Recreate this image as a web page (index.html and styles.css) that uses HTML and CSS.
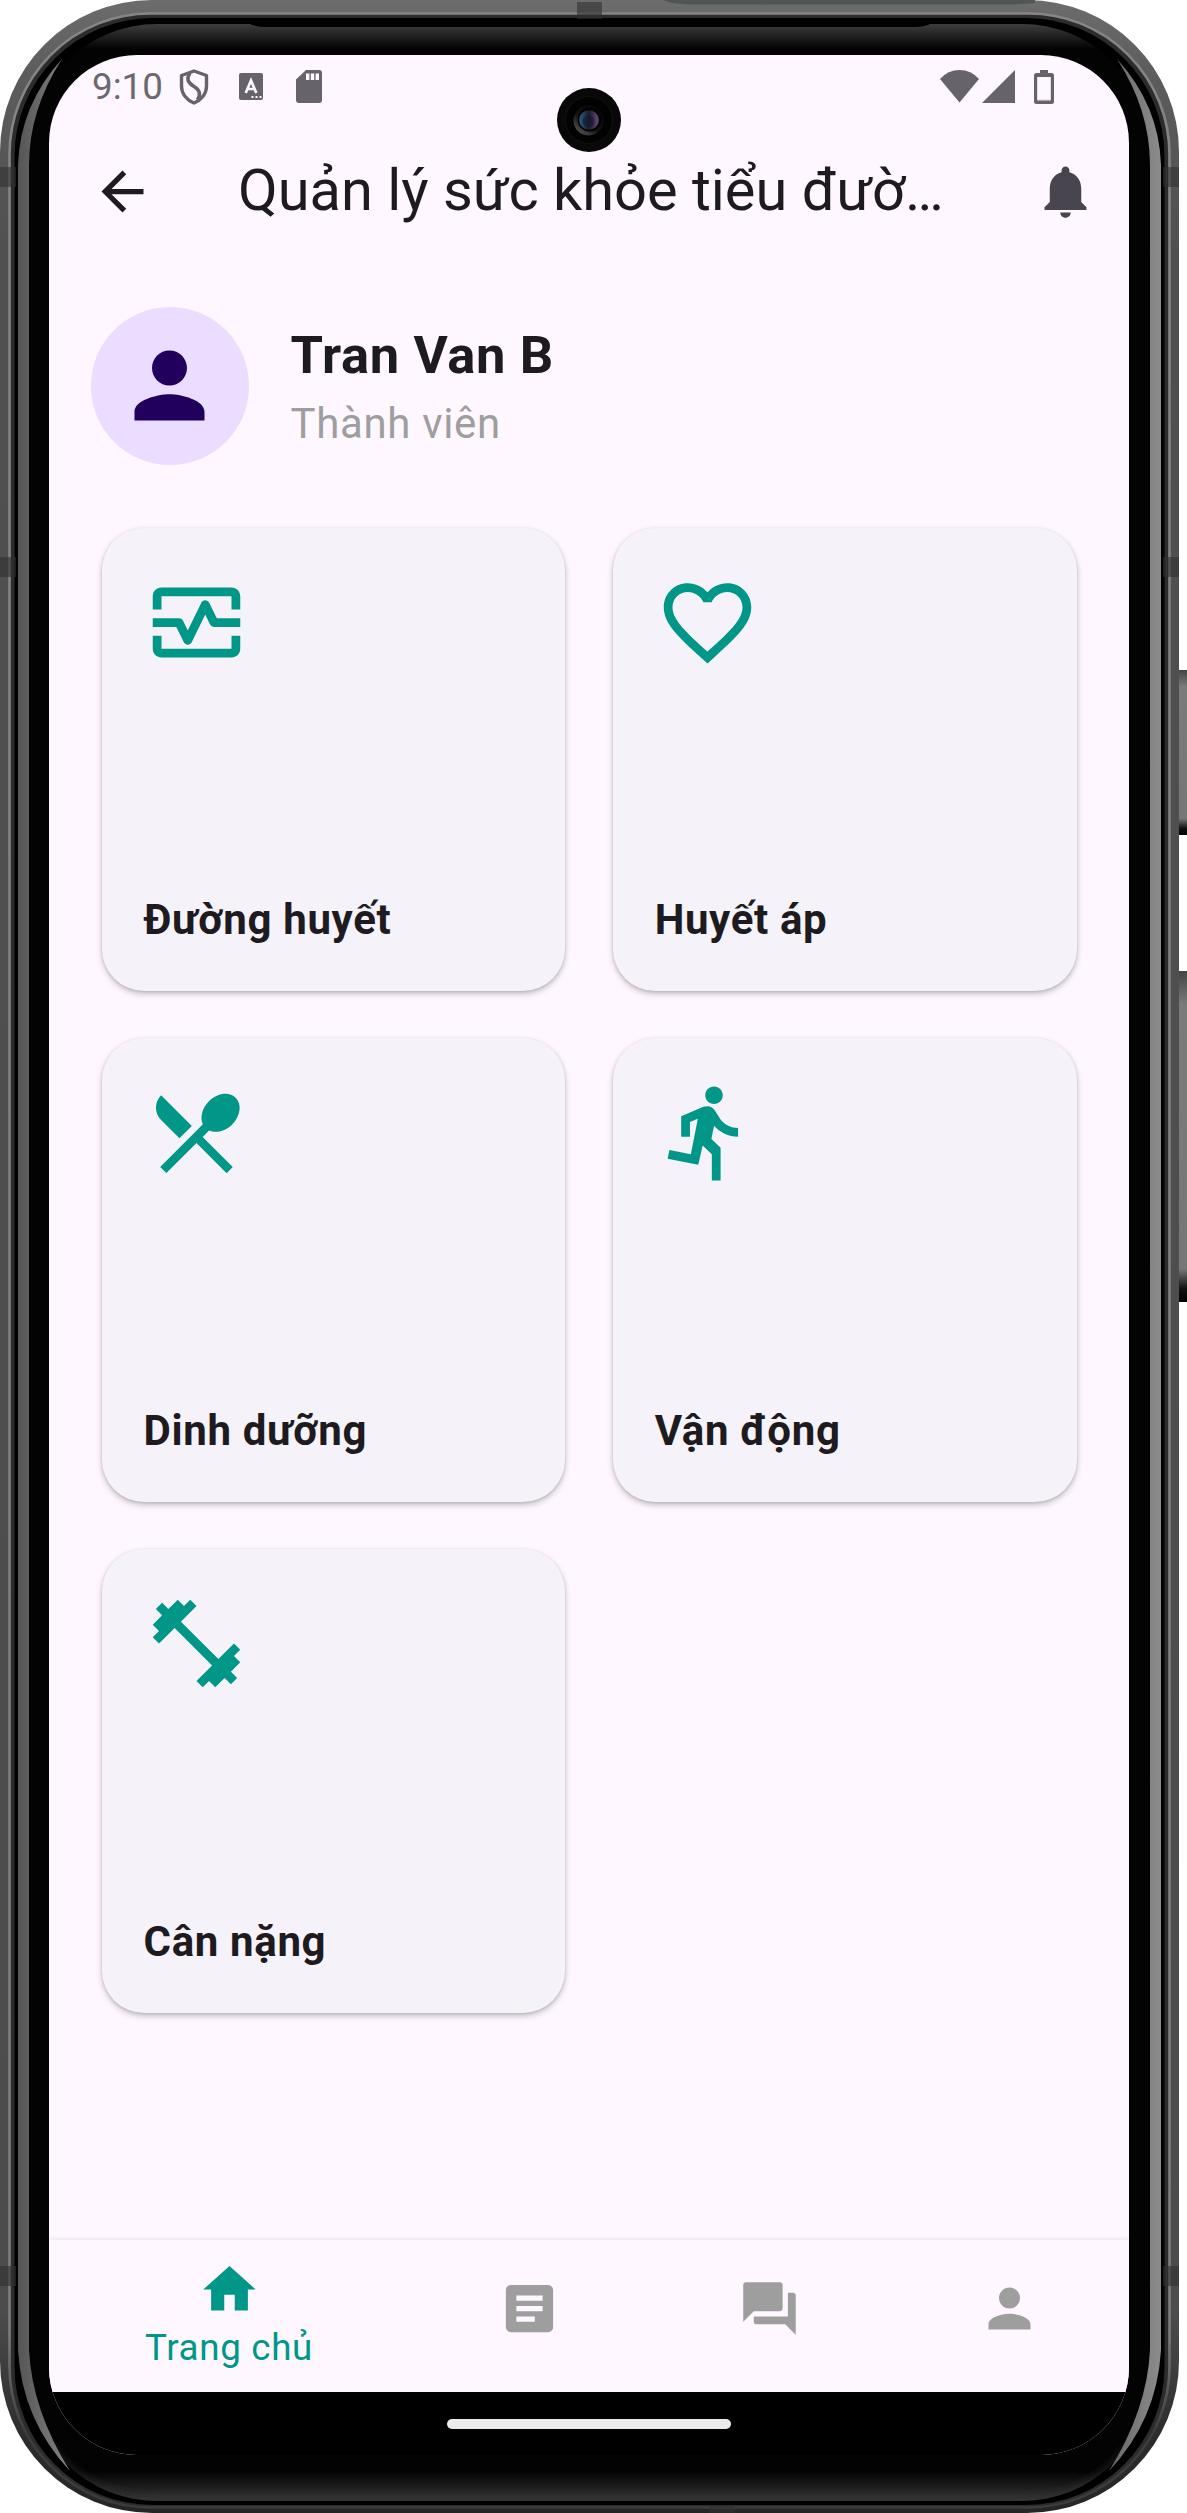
FILE: index.html
```html
<!DOCTYPE html>
<html lang="vi">
<head>
<meta charset="utf-8">
<title>Quản lý sức khỏe tiểu đường</title>
<link rel="stylesheet" href="styles.css">
</head>
<body>
<div class="device">
  <svg class="frame" viewBox="0 0 1187 2513" aria-hidden="true">
    <defs>
      <linearGradient id="shell" x1="0" y1="0" x2="0" y2="1">
        <stop offset="0" stop-color="#6c6c6c"/><stop offset=".03" stop-color="#5c5c5c"/>
        <stop offset=".1" stop-color="#505050"/><stop offset=".92" stop-color="#4c4c4c"/><stop offset=".97" stop-color="#2c2c2c"/><stop offset="1" stop-color="#262626"/>
      </linearGradient>
      <linearGradient id="ring" x1="0" y1="0" x2="0" y2="1">
        <stop offset="0" stop-color="#858585"/><stop offset=".93" stop-color="#7c7c7c"/><stop offset=".97" stop-color="#3c3c3c"/>
      </linearGradient>
      <linearGradient id="glass" gradientUnits="userSpaceOnUse" x1="0" y1="24" x2="0" y2="2501">
        <stop offset="0" stop-color="#3d3d3d"/><stop offset=".004" stop-color="#262626"/><stop offset=".010" stop-color="#030303"/>
        <stop offset=".988" stop-color="#030303"/><stop offset="1" stop-color="#343434"/>
      </linearGradient>
      <linearGradient id="bandL"><stop offset="0" stop-color="#555"/><stop offset="1" stop-color="#858585"/></linearGradient>
      <linearGradient id="bandR"><stop offset="0" stop-color="#666"/><stop offset="1" stop-color="#8c8c8c"/></linearGradient>
      <linearGradient id="key" x1="0" y1="0" x2="0" y2="1">
        <stop offset="0" stop-color="#444"/><stop offset=".1" stop-color="#7a7a7a"/><stop offset=".9" stop-color="#777"/><stop offset=".96" stop-color="#111"/><stop offset="1" stop-color="#000"/>
      </linearGradient>
      <clipPath id="glassClip"><rect x="29" y="24" width="1121" height="2477" rx="128"/></clipPath>
      <filter id="soft" x="-10%" y="-50%" width="120%" height="200%"><feGaussianBlur stdDeviation="6"/></filter>
    </defs>
    <rect x="1174" y="670" width="18" height="165" rx="4" fill="url(#key)"/>
    <rect x="1174" y="971" width="18" height="331" rx="4" fill="url(#key)"/>
    <rect x="0" y="0" width="1179" height="2513" rx="152" fill="url(#shell)"/>
    <path d="M663 0H1035V3Q1020 4.500 1000 4.500H690Q672 4 663 0Z" fill="#505652"/>
    <rect x="9.500" y="13.500" width="1160" height="2494" rx="141" fill="#2c2c2c" stroke="url(#ring)" stroke-width="2.600"/>
    <rect x="14.500" y="18" width="1150" height="2487" rx="138" fill="#000"/>
    <path d="M0 167H16V187H0ZM0 557H16V577H0ZM0 2266H16V2286H0ZM1163 167H1179V187H1163ZM1163 557H1179V577H1163ZM1163 2266H1179V2286H1163ZM577 2H602V19H577ZM709 2505H735V2513H709Z" fill="#303030" fill-opacity=".6"/>
    <rect x="29" y="24" width="1121" height="2477" rx="128" fill="url(#glass)"/>
    <path clip-path="url(#glassClip)" d="M29 2420A128 128 0 0 0 157 2504H1022A128 128 0 0 0 1150 2420" fill="none" stroke="#333" stroke-width="12" filter="url(#soft)"/>
    <path d="M248 23Q254 27 266 27H914Q926 27 932 23Z" fill="#000"/>
    <path d="M18 165Q20 105 62 59Q29 110 29 165V2350Q32 2410 70 2471Q22 2420 18 2350Z" fill="url(#bandL)"/>
    <path d="M1161 165Q1159 105 1117 59Q1150 110 1150 165V2350Q1147 2410 1109 2471Q1157 2420 1161 2350Z" fill="url(#bandR)"/>
  </svg>

  <main class="screen">
    <header class="status">
      <span class="clock">9:10</span>
      <svg class="st-shield" viewBox="0 0 30 36"><path d="M15 2L27.500 6.500V17C27.500 25 22 31 15 34C8 31 2.500 25 2.500 17V6.500Z" fill="none" stroke="#66646a" stroke-width="3.400" stroke-linejoin="round"/><path d="M11 4C7 10 9 14 15 17.500C21 21 22 25 18.500 31" fill="none" stroke="#66646a" stroke-width="3.600"/></svg>
      <svg class="st-key" viewBox="0 0 24 27"><rect width="24" height="27" rx="2" fill="#66646a"/><path d="M6.700 20L12 7.500L17.300 20M8.500 16H15.500" fill="none" stroke="#fef7ff" stroke-width="2.700"/><path d="M12.500 23h2v2h-2zM16.500 23h2v2h-2zM20.500 23h2v2h-2z" fill="#fef7ff"/></svg>
      <svg class="st-sd" viewBox="0 0 26 33"><path d="M10 0H23Q26 0 26 3V30Q26 33 23 33H3Q0 33 0 30V9.500Z" fill="#66646a"/><path d="M10 3.500h3.400v6.500H10zM14.800 3.500h3.400v6.500h-3.400zM19.600 3.500H23v6.500h-3.400z" fill="#fef7ff"/></svg>
      <span class="spacer"></span>
      <svg class="st-wifi" viewBox="0 0 39 33"><path d="M0 9Q8 0 19.500 0T39 9L19.500 32.500Z" fill="#66646a"/></svg>
      <svg class="st-cell" viewBox="0 0 33 33"><path d="M0 33L33 0V33Z" fill="#66646a"/></svg>
      <svg class="st-batt" viewBox="0 0 20 34"><path d="M6 0H14V3H17.500Q20 3 20 5.500V31.500Q20 34 17.500 34H2.500Q0 34 0 31.500V5.500Q0 3 2.500 3H6ZM3.200 7V30.500H16.800V7Z" fill="#66646a" fill-rule="evenodd"/><path d="M3.200 30.200h13.600" stroke="#b79a96" stroke-width=".7"/></svg>
    </header>

    <header class="appbar">
      <svg class="icon" viewBox="0 0 24 24"><path fill="#1d1b20" d="M20 11H7.830l5.590-5.590L12 4l-8 8 8 8 1.410-1.410L7.830 13H20v-2z"/></svg>
      <h1 class="title">Quản lý sức khỏe tiểu đườ…</h1>
      <svg class="icon" viewBox="0 0 24 24"><path fill="#49454f" d="M12 22c1.100 0 2-.9 2-2h-4c0 1.100.89 2 2 2zm6-6v-5c0-3.070-1.640-5.640-4.500-6.320V4c0-.83-.67-1.500-1.500-1.500s-1.500.67-1.500 1.500v.68C7.630 5.360 6 7.920 6 11v5l-2 2v1h16v-1l-2-2z"/></svg>
    </header>

    <section class="profile">
      <div class="avatar"><svg class="icon-lg" viewBox="0 0 24 24"><path fill="#21005d" d="M12 12c2.210 0 4-1.790 4-4s-1.790-4-4-4-4 1.790-4 4 1.790 4 4 4zm0 2c-2.670 0-8 1.340-8 4v2h16v-2c0-2.660-5.330-4-8-4z"/></svg></div>
      <div class="who">
        <div class="name">Tran Van B</div>
        <div class="role">Thành viên</div>
      </div>
    </section>

    <section class="grid">
      <article class="card">
        <svg class="icon-lg" viewBox="0 0 24 24" fill="#009688"><path d="M2 9V6c0-1.100.9-2 2-2h16c1.100 0 2 .9 2 2v3h-2V6H4v3ZM2 15v3c0 1.100.9 2 2 2h16c1.100 0 2-.9 2-2v-3h-2v3H4v-3Z"/><path d="M2 12H8L10 16.100L14 7.900L16 12H22" fill="none" stroke="#009688" stroke-width="2" stroke-linejoin="round"/></svg>
        <div class="label">Đường huyết</div>
      </article>
      <article class="card">
        <svg class="icon-lg" viewBox="0 0 24 24" fill="#009688"><path d="M16.500 3c-1.740 0-3.410.81-4.500 2.090C10.910 3.810 9.240 3 7.500 3 4.420 3 2 5.420 2 8.500c0 3.780 3.400 6.860 8.550 11.540L12 21.350l1.450-1.320C18.600 15.360 22 12.280 22 8.500 22 5.420 19.580 3 16.500 3zm-4.400 15.550l-.1.100-.1-.1C7.140 14.240 4 11.390 4 8.500 4 6.500 5.500 5 7.500 5c1.540 0 3.040.99 3.570 2.360h1.870C13.460 5.990 14.960 5 16.500 5c2 0 3.500 1.500 3.500 3.500 0 2.890-3.140 5.740-7.900 10.050z"/></svg>
        <div class="label">Huyết áp</div>
      </article>
      <article class="card">
        <svg class="icon-lg" viewBox="0 0 24 24" fill="#009688"><path d="M8.100 13.340l2.830-2.830L3.910 3.500c-1.560 1.560-1.560 4.090 0 5.660l4.190 4.180zm6.780-1.810c1.530.71 3.680.21 5.270-1.380 1.910-1.910 2.280-4.650.81-6.120-1.460-1.460-4.200-1.100-6.120.81-1.590 1.590-2.090 3.740-1.380 5.270L3.700 19.870l1.410 1.410L12 14.410l6.880 6.880 1.410-1.410L13.410 13l1.470-1.470z"/></svg>
        <div class="label">Dinh dưỡng</div>
      </article>
      <article class="card">
        <svg class="icon-lg" viewBox="0 0 24 24" fill="#009688"><path d="M13.490 5.480c1.100 0 2-.9 2-2s-.9-2-2-2-2 .9-2 2 .9 2 2 2zm-3.600 13.900l1-4.400 2.100 2v6h2v-7.500l-2.100-2 .6-3c1.300 1.500 3.300 2.500 5.500 2.500v-2c-1.900 0-3.500-1-4.300-2.400l-1-1.600c-.4-.6-1-1-1.700-1-.3 0-.5.1-.8.1l-5.200 2.200v4.700h2v-3.400l1.800-.7-1.600 8.100-4.900-1-.4 2 7 1.400z"/></svg>
        <div class="label">Vận động</div>
      </article>
      <article class="card">
        <svg class="icon-lg" viewBox="0 0 24 24" fill="#009688"><path d="M20.570 14.860L22 13.430 20.570 12 17 15.570 8.430 7 12 3.430 10.570 2 9.140 3.430 7.710 2 5.570 4.140 4.140 2.710 2.710 4.140l1.430 1.430L2 7.710l1.430 1.430L2 10.570 3.430 12 7 8.430 15.570 17 12 20.570 13.430 22l1.430-1.430L16.290 22l2.140-2.140 1.430 1.430 1.430-1.430-1.430-1.430L22 16.290z"/></svg>
        <div class="label">Cân nặng</div>
      </article>
    </section>

    <nav class="tabs">
      <div class="tab active">
        <svg class="icon" viewBox="0 0 24 24"><path fill="#009688" d="M10 20v-6h4v6h5v-8h3L12 3 2 12h3v8z"/></svg>
        <span class="tab-label">Trang chủ</span>
      </div>
      <div class="tab"><svg class="icon" viewBox="0 0 24 24"><path fill="#9e9e9e" d="M19 3H5c-1.100 0-2 .9-2 2v14c0 1.100.9 2 2 2h14c1.100 0 2-.9 2-2V5c0-1.100-.9-2-2-2zm-5 14H7v-2h7v2zm3-4H7v-2h10v2zm0-4H7V7h10v2z"/></svg></div>
      <div class="tab"><svg class="icon" viewBox="0 0 24 24"><path fill="#9e9e9e" d="M21 6h-2v9H6v2c0 .55.45 1 1 1h11l4 4V7c0-.55-.45-1-1-1zm-4 6V3c0-.55-.45-1-1-1H3c-.55 0-1 .45-1 1v14l4-4h10c.55 0 1-.45 1-1z"/></svg></div>
      <div class="tab"><svg class="icon" viewBox="0 0 24 24"><path fill="#9e9e9e" d="M12 12c2.210 0 4-1.790 4-4s-1.790-4-4-4-4 1.790-4 4 1.790 4 4 4zm0 2c-2.670 0-8 1.340-8 4v2h16v-2c0-2.660-5.330-4-8-4z"/></svg></div>
    </nav>

    <footer class="gesture"><span class="handle"></span></footer>
  </main>

  <svg class="camera" viewBox="0 0 64 64" aria-hidden="true">
    <defs>
      <linearGradient id="lens"><stop offset="0" stop-color="#29617c"/><stop offset=".5" stop-color="#191a30"/><stop offset="1" stop-color="#6d4a80"/></linearGradient>
      <linearGradient id="rim" x1="0" y1="1" x2=".8" y2="0"><stop offset="0" stop-color="#666"/><stop offset=".5" stop-color="#111"/><stop offset="1" stop-color="#050505"/></linearGradient>
    </defs>
    <circle cx="32" cy="32" r="32" fill="#080808"/>
    <circle cx="32" cy="32" r="23.500" fill="#020202" stroke="#111"/>
    <circle cx="31.500" cy="32.500" r="15" fill="url(#rim)"/>
    <circle cx="32.500" cy="31.500" r="12" fill="#020202"/>
    <circle cx="32" cy="32" r="9.800" fill="url(#lens)"/>
    <circle cx="31.500" cy="33.500" r="6" fill="#15172c" opacity=".6"/>
  </svg>
</div>
</body>
</html>
```
FILE: styles.css
```css
* { box-sizing: border-box; }

body {
  margin: 0;
  background: #fff;
  font-family: Roboto, "Noto Sans", sans-serif;
  color: #1d1b20;
}

svg { display: block; flex: none; }

.device {
  position: relative;
  width: 1187px;
  height: 2513px;
  padding: 55px 58px 58px 49px;
  overflow: hidden;
}

.frame {
  position: absolute;
  left: 0;
  top: 0;
  width: 1187px;
  height: 2513px;
}

.screen {
  position: relative;
  display: flex;
  flex-direction: column;
  width: 1080px;
  height: 2400px;
  border-radius: 88px;
  overflow: hidden;
  background: #fef7ff;
}

.camera {
  position: absolute;
  left: 557px;
  top: 88px;
  width: 64px;
  height: 64px;
}

.icon { width: 63px; height: 63px; }
.icon-lg { width: 105px; height: 105px; }

.status {
  display: flex;
  align-items: center;
  height: 63px;
  padding: 0 75px 0 43px;
  flex: none;
}

.clock {
  width: 87px;
  font-size: 36.750px;
  line-height: 43px;
  color: #6b696f;
}

.st-shield { width: 30px; height: 36px; margin-right: 30px; }
.st-key { width: 24px; height: 27px; margin-right: 33px; }
.st-sd { width: 26px; height: 33px; }
.spacer { flex: 1; }
.st-wifi { width: 39px; height: 33px; margin-right: 3px; }
.st-cell { width: 33px; height: 33px; margin-right: 19px; }
.st-batt { width: 20px; height: 34px; }

.appbar {
  display: flex;
  align-items: center;
  height: 147px;
  padding: 0 32px 0 42px;
  flex: none;
}

.title {
  flex: 1;
  margin: 0 0 3px 84px;
  font-size: 57.750px;
  font-weight: 400;
  line-height: 74px;
  white-space: nowrap;
}

.profile {
  display: flex;
  align-items: center;
  gap: 42px;
  padding: 42px 42px 0;
  flex: none;
}

.avatar {
  display: flex;
  align-items: center;
  justify-content: center;
  width: 157.500px;
  height: 157.500px;
  border-radius: 50%;
  background: #eaddff;
}

.who { padding-top: 2px; }

.name {
  font-size: 52.500px;
  font-weight: 700;
  line-height: 75px;
  letter-spacing: 0.660px;
}

.role {
  font-size: 42px;
  line-height: 62px;
  letter-spacing: 0.660px;
  color: #9e9e9e;
}

.grid {
  display: grid;
  grid-template-columns: 1fr 1fr;
  grid-auto-rows: 463.900px;
  gap: 46.900px 47.250px;
  padding: 63px 52.500px 0;
  flex: 1;
}

.card {
  display: flex;
  flex-direction: column;
  justify-content: space-between;
  padding: 42px 42px 41px;
  border-radius: 42px;
  background: #f6f2f9;
  box-shadow: 0 3px 6px rgba(0, 0, 0, 0.22), 0 1px 3px rgba(0, 0, 0, 0.12);
}

.label {
  font-size: 42px;
  font-weight: 700;
  line-height: 60px;
  letter-spacing: 0.660px;
}

.tabs {
  display: flex;
  height: 152px;
  background: #fef7ff;
  box-shadow: 0 -1px 5px rgba(0, 0, 0, 0.09);
  flex: none;
}

.tab {
  display: flex;
  flex-direction: column;
  align-items: center;
  width: 240px;
  padding-top: 37px;
}

.active {
  width: 360px;
  padding-top: 18px;
}

.tab-label {
  margin-top: 1px;
  font-size: 36.750px;
  line-height: 52px;
  letter-spacing: 0.660px;
  color: #009688;
}

.gesture {
  display: flex;
  justify-content: center;
  height: 63px;
  padding-top: 27px;
  background: #000;
  flex: none;
}

.handle {
  width: 284px;
  height: 10px;
  border-radius: 5px;
  background: #ebebeb;
}
```
